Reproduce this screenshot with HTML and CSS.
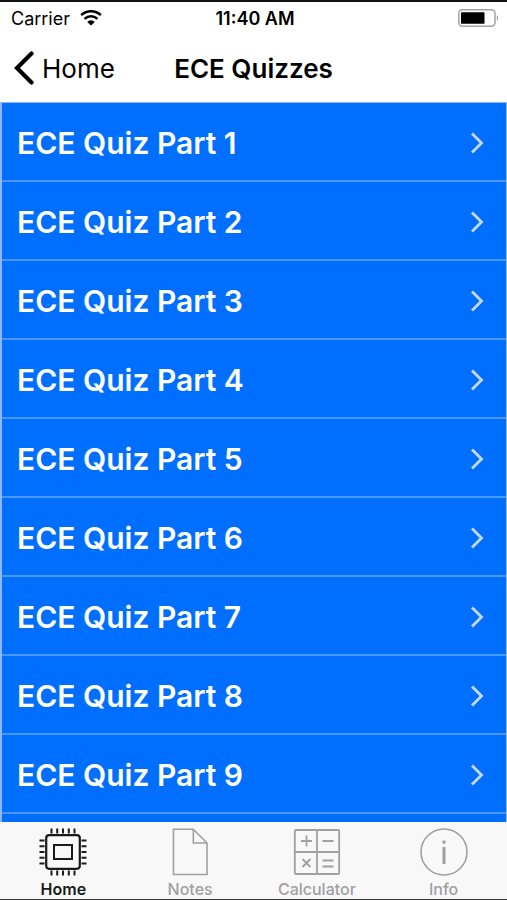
FILE: index.html
```html
<!DOCTYPE html>
<html lang="en">
<head>
<meta charset="utf-8">
<meta name="viewport" content="width=device-width, initial-scale=1">
<title>ECE Quizzes</title>
<link rel="stylesheet" href="styles.css">
</head>
<body>
<div class="app">
  <div class="status">
    <div class="status-left">
      <span>Carrier</span>
      <svg class="wifi" viewBox="0 0 22 16" width="22" height="16" aria-hidden="true">
        <path d="M1.2 5.2a14 14 0 0 1 19.6 0M4.6 8.9a9.2 9.2 0 0 1 12.8 0" fill="none" stroke="#000" stroke-width="2.5"/>
        <path d="M11 15.6 7.2 11.9a5.4 5.4 0 0 1 7.600 0z"/>
      </svg>
    </div>
    <time class="clock">11:40 AM</time>
    <svg class="battery" viewBox="0 0 42 18" width="42" height="18" aria-hidden="true">
      <rect x="1.800" y=".8" width="36.200" height="16.400" rx="3.600" fill="none" stroke="#a3a3a3" stroke-width="1.500"/>
      <rect x="4" y="3.300" width="23.500" height="11.400" rx=".6"/>
      <path d="M39.800 6q2.600 3 0 6z" fill="#999"/>
    </svg>
  </div>
  <header class="nav">
    <a class="back" href="#home">
      <svg viewBox="0 0 20 34" width="20" height="34" aria-hidden="true"><path d="M17.500 2.500 3 17l14.500 14.500" fill="none" stroke="#000" stroke-width="4.200" stroke-linecap="round"/></svg>
      <span>Home</span>
    </a>
    <h1>ECE Quizzes</h1>
  </header>
  <main class="list">
    <svg class="defs" width="0" height="0" aria-hidden="true"><symbol id="chevron" viewBox="0 0 14 22"><path d="M2 1.500l9.500 9.500L2 20.500" fill="none" stroke="#c8d8f0" stroke-width="2.800"/></symbol></svg>
    <a class="row" href="#q1">ECE Quiz Part 1<svg width="14" height="22"><use href="#chevron"/></svg></a>
    <a class="row" href="#q2">ECE Quiz Part 2<svg width="14" height="22"><use href="#chevron"/></svg></a>
    <a class="row" href="#q3">ECE Quiz Part 3<svg width="14" height="22"><use href="#chevron"/></svg></a>
    <a class="row" href="#q4">ECE Quiz Part 4<svg width="14" height="22"><use href="#chevron"/></svg></a>
    <a class="row" href="#q5">ECE Quiz Part 5<svg width="14" height="22"><use href="#chevron"/></svg></a>
    <a class="row" href="#q6">ECE Quiz Part 6<svg width="14" height="22"><use href="#chevron"/></svg></a>
    <a class="row" href="#q7">ECE Quiz Part 7<svg width="14" height="22"><use href="#chevron"/></svg></a>
    <a class="row" href="#q8">ECE Quiz Part 8<svg width="14" height="22"><use href="#chevron"/></svg></a>
    <a class="row" href="#q9">ECE Quiz Part 9<svg width="14" height="22"><use href="#chevron"/></svg></a>
  </main>
  <nav class="tabs">
    <a class="tab active" href="#home">
      <svg viewBox="0 0 48 48" width="48" height="48" fill="none" stroke="currentColor" aria-hidden="true">
        <rect x="7.200" y="7.200" width="33.600" height="33.600" rx="3" stroke-width="2.200"/>
        <rect x="15" y="17" width="18" height="14" stroke-width="2"/>
        <path stroke-width="2" d="M12.500 0.500v5M18.200 0.500v5M24 0.500v5M29.800 0.500v5M35.500 0.500v5M12.500 42.500v5M18.200 42.500v5M24 42.500v5M29.800 42.500v5M35.500 42.500v5M0.500 12.500h5M0.500 18.200h5M0.500 24h5M0.500 29.800h5M0.500 35.500h5M42.500 12.500h5M42.500 18.200h5M42.500 24h5M42.500 29.800h5M42.500 35.500h5"/>
      </svg>
      <span>Home</span>
    </a>
    <a class="tab" href="#notes">
      <svg viewBox="0 0 48 48" width="48" height="48" fill="none" stroke="currentColor" stroke-width="1.600" aria-hidden="true">
        <path d="M7.500 1.200h19.800L41 15v31.500H7.500zM27.300 1.200V15H41"/>
      </svg>
      <span>Notes</span>
    </a>
    <a class="tab" href="#calculator">
      <svg viewBox="0 0 48 48" width="48" height="48" fill="none" stroke="currentColor" stroke-width="1.800" aria-hidden="true">
        <rect x="1.800" y="2" width="44.400" height="44" rx="1"/>
        <path d="M24 2v44M1.800 24h44.400M8 13h11M13.500 7.500v11M29.500 13h11M9.500 31l8 8M17.500 31l-8 8M29.500 32.500h11M29.500 38.500h11"/>
      </svg>
      <span>Calculator</span>
    </a>
    <a class="tab" href="#info">
      <svg viewBox="0 0 48 48" width="48" height="48" fill="none" stroke="currentColor" aria-hidden="true">
        <circle cx="24" cy="24" r="23" stroke-width="1.600"/>
        <path d="M24 19v17M24 12.500v3.200" stroke-width="3"/>
      </svg>
      <span>Info</span>
    </a>
  </nav>
</div>
</body>
</html>
```
FILE: styles.css
```css
* { box-sizing: border-box; }

body {
  margin: 0;
  background: #fff;
  color: #000;
  font-family: Inter, "Liberation Sans", sans-serif;
}

a { color: inherit; text-decoration: none; }
svg { display: block; flex: none; }

.app {
  display: flex;
  flex-direction: column;
  min-height: 100vh;
  border-top: 2px solid #111;
  border-bottom: 1px solid #333;
}

.status {
  display: grid;
  grid-template-columns: 1fr auto 1fr;
  align-items: center;
  height: 32px;
  padding: 0 8px 0 11px;
  font-size: 18px;
}

.status-left { display: flex; align-items: center; gap: 10px; }
.clock { font-weight: 600; }
.battery { justify-self: end; }

.nav {
  display: grid;
  grid-template-columns: 1fr auto 1fr;
  align-items: center;
  height: 68px;
  padding: 0 14px;
}

.back { display: flex; align-items: center; gap: 8px; font-size: 26px; }
h1 { margin: 0; font-size: 26px; font-weight: 600; }

.list {
  flex: 1;
  background: #006fff;
  border: 1px solid #8fb8ee;
  border-width: 1px 1px 0 2px;
}

.defs { position: absolute; }

.row {
  display: flex;
  align-items: center;
  justify-content: space-between;
  height: 79px;
  padding: 2px 22px 0 15px;
  border-bottom: 2px solid #4b96fa;
  color: #fff;
  font-size: 30px;
  font-weight: 600;
}

.tabs {
  display: grid;
  grid-template-columns: repeat(4, 1fr);
  height: 77px;
  background: #f8f8f8;
}

.tab {
  display: flex;
  flex-direction: column;
  align-items: center;
  padding-top: 6px;
  gap: 4px;
  color: #a0a0a0;
  font-size: 16px;
  line-height: 18px;
  font-weight: 500;
}

.tab.active { color: #1a1a1a; font-weight: 600; }
```
